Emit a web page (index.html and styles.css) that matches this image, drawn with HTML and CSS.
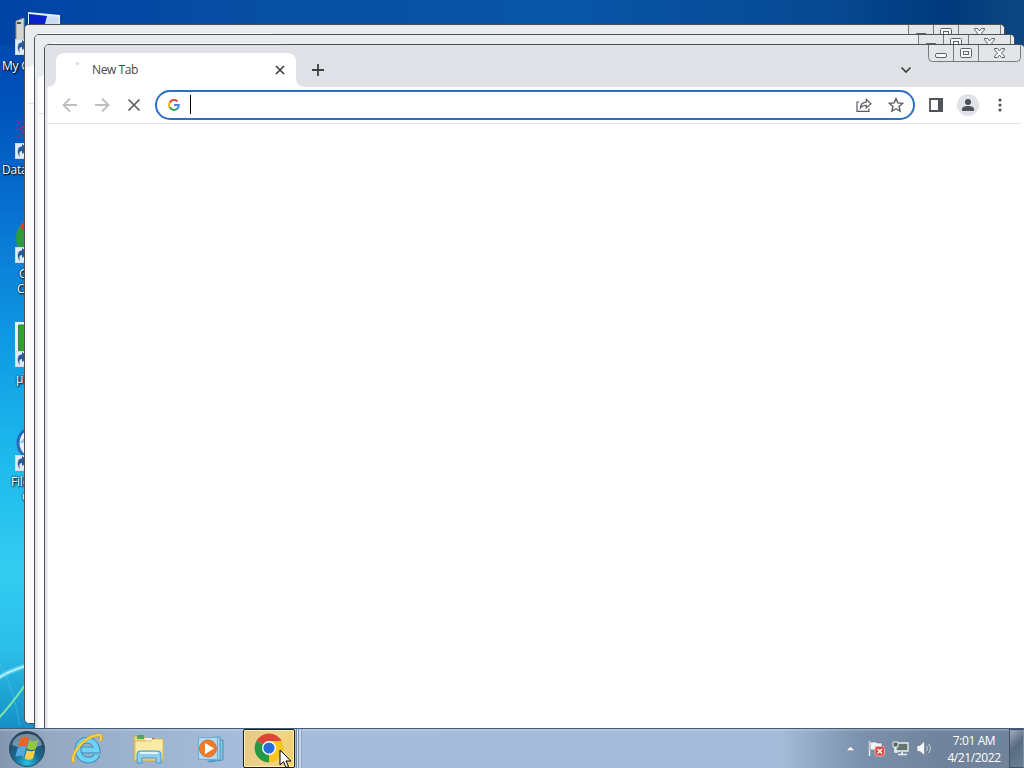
FILE: index.html
```html
<!DOCTYPE html>
<html lang="en">
<head>
    <meta charset="UTF-8">
    <meta name="viewport" content="width=device-width, initial-scale=1.0">
    <title>New Tab</title>
    <link rel="stylesheet" href="styles.css">
</head>
<body>
    <!-- shared symbols -->
    <svg class="symbols" width="0" height="0">
        <symbol id="shortcut" viewBox="0 0 16 16">
            <rect x=".5" y=".5" width="15" height="15" fill="#dfeaf5" stroke="#c9d9e8"/>
            <path d="M5 14C1.500 10 2 3.500 7 3.500V1l7 5-7 5V8c-3 0-3 3-2 6z" fill="#235b9c"/>
        </symbol>
        <symbol id="controls" viewBox="0 0 94 18">
            <path d="M.5 0v13.500q0 4 4 4h84q4 0 4-4V.5H.5" fill="#e3e5e9" stroke="#77797d"/>
            <path d="M25.500 0v17M50.500 0v17" stroke="#77797d"/>
            <g fill="#f7f8f9" stroke="#606267">
                <rect x="7.500" y="9.500" width="11" height="4" rx="1.500"/>
                <rect x="32.500" y="4.500" width="11" height="9" rx="1"/>
                <rect x="35.500" y="7.500" width="5" height="3"/>
                <path d="M66.500 4.500h3l2 2.500 2-2.500h3l-.2 1.500-2.800 3 2.800 3 .2 1.500h-3l-2-2.500-2 2.500h-3l.2-1.500 2.800-3-2.800-3z"/>
            </g>
        </symbol>
    </svg>

    <div class="desktop">
        <svg class="light-trails" width="40" height="110" viewBox="0 0 40 110" fill="none">
            <path d="M-2 60Q12 51 40 44" stroke="#8fe6fb" stroke-width="5" opacity=".5"/>
            <path d="M-2 60Q12 51 40 44" stroke="#c5f5ff" stroke-width="1.500"/>
            <path d="M-2 101Q12 86 30 60" stroke="#83e6a6" stroke-width="2"/>
            <path d="M-2 42Q14 70 20 108" stroke="#7fdcf5" opacity=".3"/>
        </svg>

        <div class="icon computer">
            <svg width="48" height="46" viewBox="0 0 48 46">
                <path d="M4 11l8-3v29H4z" fill="#d5d6d2" stroke="#8c9193"/>
                <path d="M5 13h4" stroke="#4b5453" stroke-width="2"/>
                <path d="M16 2l33 3-2 30-31-3z" fill="#e7edf4"/>
                <path d="M17 4l30 3-2 25-28-3z" fill="#cbdcf3"/>
                <path d="M17 4l18 2-6 24-12-1z" fill="#0921c9"/>
                <use href="#shortcut" x="3" y="29" width="16" height="16"/>
            </svg>
            <span class="label">My Computer</span>
        </div>
        <div class="icon database">
            <svg width="48" height="46" viewBox="0 0 48 46">
                <path d="M6 8l5 5 5-5M6 23l5-6 5 6M7 15h8" stroke="#a72c62" stroke-width="1.500" fill="none" stroke-dasharray="3 2"/>
                <use href="#shortcut" x="3" y="29" width="16" height="16"/>
            </svg>
            <span class="label">Database</span>
        </div>
        <div class="icon chrome-link">
            <svg width="48" height="46" viewBox="0 0 48 46">
                <circle cx="24" cy="20" r="20" fill="#2c9c3d"/>
                <path d="M8 8A20 20 0 0 1 41 10L24 20 12 14z" fill="#e33b2e"/>
                <use href="#shortcut" x="3" y="29" width="16" height="16"/>
            </svg>
            <span class="label">Google</span>
            <span class="label">Chrome</span>
        </div>
        <div class="icon torrent">
            <svg width="48" height="46" viewBox="0 0 48 46">
                <path d="M3 0h40v44H3z" fill="#e7f0ec"/>
                <path d="M6.500 3h34v38h-34z" fill="#2da52b" stroke="#53716a"/>
                <use href="#shortcut" x="3" y="29" width="16" height="16"/>
            </svg>
            <span class="label">µTorrent</span>
        </div>
        <div class="icon viewer">
            <svg width="48" height="46" viewBox="0 0 48 46">
                <circle cx="22" cy="17" r="16" fill="#e5f2fb" stroke="#2867c0" stroke-width="3"/>
                <path d="M7 17l10-10v10z" fill="#9cc6ed"/>
                <use href="#shortcut" x="3" y="29" width="16" height="16"/>
            </svg>
            <span class="label">File Viewer</span>
            <span class="label">Gold</span>
        </div>

        <div class="window window-back">
            <svg class="controls" width="94" height="18"><use href="#controls"/></svg>
            <div class="tab-strip"><div class="tab"></div></div>
            <div class="toolbar"></div>
        </div>
        <div class="window window-middle">
            <svg class="controls" width="94" height="18"><use href="#controls"/></svg>
            <div class="tab-strip"><div class="tab"></div></div>
            <div class="toolbar"></div>
        </div>
        <div class="window window-front">
            <svg class="controls" width="94" height="18"><use href="#controls"/></svg>
            <div class="tab-strip">
                <div class="tab">
                    <span class="loading"></span>
                    <span class="tab-title">New Tab</span>
                    <svg width="10" height="10" viewBox="0 0 10 10"><path d="M1 1l8 8M9 1l-8 8" stroke="#3c4043" stroke-width="1.700"/></svg>
                </div>
                <svg class="new-tab" width="12" height="12" viewBox="0 0 12 12"><path d="M6 0v12M0 6h12" stroke="#3c4043" stroke-width="1.800"/></svg>
                <svg class="tab-search" width="12" height="8" viewBox="0 0 12 8"><path d="M1.500 1.500L6 6l4.500-4.500" fill="none" stroke="#3c4043" stroke-width="1.700"/></svg>
            </div>
            <div class="toolbar">
                <svg class="nav" width="16" height="16" viewBox="0 0 16 16"><path d="M15 8H2M8 1.500L1.500 8 8 14.500" fill="none" stroke="#bcbec1" stroke-width="1.800"/></svg>
                <svg class="nav" width="16" height="16" viewBox="0 0 16 16"><path d="M1 8h13M8 1.500L14.500 8 8 14.500" fill="none" stroke="#bcbec1" stroke-width="1.800"/></svg>
                <svg class="nav" width="16" height="16" viewBox="0 0 16 16"><path d="M2.500 2.500l11 11M13.500 2.500l-11 11" stroke="#5a5d61" stroke-width="1.700"/></svg>
                <div class="address">
                    <svg width="12" height="12" viewBox="0 0 12 12" fill="none" stroke-width="2">
                        <path d="M9.600 2.400A5 5 0 0 0 1.700 3.700" stroke="#e64334"/>
                        <path d="M1.700 3.500A5 5 0 0 0 1.700 8.500" stroke="#f9bb0b"/>
                        <path d="M1.700 8.300A5 5 0 0 0 9.200 9.800" stroke="#34a853"/>
                        <path d="M6 6h4.800A5 5 0 0 1 9.100 9.900" stroke="#4285f4"/>
                    </svg>
                    <span class="caret"></span>
                    <svg class="share" width="16" height="16" viewBox="0 0 16 16" fill="none" stroke="#5a5d61" stroke-width="1.200">
                        <path d="M3 5H1v9.300h12V11.500"/>
                        <path d="M4.300 11c.3-4 2.400-5.800 6-5.900V2.300L15 6.700 10.300 11V8.300C7.500 8.200 5.700 9 4.300 11z"/>
                    </svg>
                    <svg width="16" height="16" viewBox="0 0 16 16"><path d="M8 1.700l1.900 4.200 4.600.5-3.400 3.100 1 4.500L8 11.700 3.900 14l1-4.500L1.500 6.400l4.600-.5z" fill="none" stroke="#5a5d61" stroke-width="1.400"/></svg>
                </div>
                <svg class="panel" width="14" height="14" viewBox="0 0 14 14"><path d="M1 1h12v12H1z" fill="none" stroke="#505357" stroke-width="1.800"/><path d="M9 0h5v14H9z" fill="#505357"/></svg>
                <svg class="profile" width="22" height="22" viewBox="0 0 22 22"><circle cx="11" cy="11" r="11" fill="#e1e3e9"/><circle cx="11" cy="7.900" r="3" fill="#4d5158"/><path d="M5 17v-2c0-4 12-4 12 0v2z" fill="#4d5158"/></svg>
                <svg class="menu" width="4" height="14" viewBox="0 0 4 14" fill="#505357"><circle cx="2" cy="2" r="1.600"/><circle cx="2" cy="7" r="1.600"/><circle cx="2" cy="12" r="1.600"/></svg>
            </div>
        </div>
    </div>

    <div class="taskbar">
        <svg class="start" width="38" height="38" viewBox="0 0 38 38">
            <defs>
                <radialGradient id="orb" cx="50%" cy="90%" r="85%">
                    <stop offset="0" stop-color="#29c0df"/>
                    <stop offset=".45" stop-color="#17688f"/>
                    <stop offset="1" stop-color="#2b455d"/>
                </radialGradient>
            </defs>
            <circle cx="19" cy="19" r="17.500" fill="url(#orb)" stroke="#284863"/>
            <path d="M4 15C7 0 31 0 34 15Q19 22 4 15z" fill="#d2e2ec" opacity=".45"/>
            <path d="M12.500 8q4-2.500 8.500 0l-2.200 9q-4-2.500-8.500 0z" fill="#e96524"/>
            <path d="M21.500 10q4 2.500 8.500 0l-2.200 9q-4 2-8.500 0z" fill="#95c743"/>
            <path d="M9.500 18q4-2.500 8.500 0l-2.200 9q-4-2.500-8.500 0z" fill="#57a8e0"/>
            <path d="M18.800 20q4 2.500 8.500 0l-2.200 8.500q-4 2.500-8.500 0z" fill="#fbd14c"/>
        </svg>
        <svg class="explorer" width="34" height="34" viewBox="0 0 34 34" fill="none">
            <path d="M27 22.500C24 31 9 30 8 18S25 4 27 18H12" stroke="#2a87bb" stroke-width="6.500"/>
            <path d="M27 22.500C24 31 9 30 8 18S25 4 27 18H12" stroke="#6fd4f3" stroke-width="4.800"/>
            <path d="M4 30C-1 25 12 5 28 3c4-.5 4 3 2 6" stroke="#d99e1d" stroke-width="3"/>
            <path d="M4 30C-1 25 12 5 28 3c4-.5 4 3 2 6" stroke="#fbd545" stroke-width="1.800"/>
        </svg>
        <svg class="folders" width="34" height="32" viewBox="0 0 34 32">
            <path d="M2 3h10l2 3h17v22H2z" fill="#eed57c" stroke="#c6a951"/>
            <path d="M5 2h7v4H5z" fill="#4fa85b"/>
            <path d="M13 5h8v4h-8z" fill="#f6f4e4"/>
            <path d="M20 5h3v2h-3z" fill="#d34c2c"/>
            <path d="M3 8h16l2-2h10v20H3z" fill="#f9eaa6" stroke="#d9bf69"/>
            <path d="M5 30V21q0-3 3-3h18q3 0 3 3v9h-5v-5H10v5z" fill="#8fcdec" stroke="#4c9dcc"/>
            <path d="M8 20h18" stroke="#dcf5ff" stroke-width="2"/>
        </svg>
        <svg class="player" width="28" height="28" viewBox="0 0 28 28">
            <path d="M8 4l18 1v20l-14 2z" fill="#8fbfdf" stroke="#4a92bb"/>
            <path d="M5 3l18-1v23l-12 1z" fill="#a9d5ee" stroke="#4b9bc8"/>
            <path d="M1.500 2.500h19v22h-19z" fill="#b4d7ee" stroke="#6aaed4"/>
            <circle cx="11" cy="13.500" r="8.500" fill="#f37a27" stroke="#c9733c"/>
            <path d="M8 8l9 5.500L8 19z" fill="#fff"/>
        </svg>
        <div class="task-stack">
            <div class="task">
                <svg width="30" height="30" viewBox="0 0 30 30">
                    <path d="M15 15L2.500 7.800A14.500 14.500 0 0 1 27.600 7.800z" fill="#dc4537"/>
                    <path d="M15 15L27.600 7.800A14.500 14.500 0 0 1 15 29.500z" fill="#fbc71e"/>
                    <path d="M15 15v14.500A14.500 14.500 0 0 1 2.500 7.800z" fill="#279846"/>
                    <path d="M15 8h12.700A14.500 14.500 0 0 1 15 29.500L21 18.500z" fill="#fbc71e"/>
                    <circle cx="15" cy="15" r="7" fill="#fff"/>
                    <circle cx="15" cy="15" r="5.600" fill="#246ed5"/>
                </svg>
            </div>
        </div>
        <div class="tray">
            <svg width="9" height="5" viewBox="0 0 9 5"><path d="M.5 4.500l4-4 4 4z" fill="#fff" stroke="#596a80" stroke-width=".3"/></svg>
            <svg class="flag" width="17" height="17" viewBox="0 0 17 17">
                <path d="M1.500 1v15" stroke="#e9eef2" stroke-width="1.500"/>
                <path d="M2 2h6l1 1h5v8H8L7 10H2z" fill="#f0f3f5" stroke="#6e7780" stroke-width=".6"/>
                <rect x="7" y="6.500" width="9.500" height="9.500" rx="2" fill="#d94a40" stroke="#efaaa2"/>
                <path d="M9.500 9l4.500 4.500M14 9l-4.500 4.500" stroke="#fff" stroke-width="1.500"/>
            </svg>
            <svg class="network" width="17" height="17" viewBox="0 0 17 17">
                <path d="M4 3h12v8H4z" fill="#62766c" stroke="#e9efed" stroke-width="1.300"/>
                <path d="M1 2h5v5H1z" fill="#596666" stroke="#e9efed"/>
                <path d="M3 7v5h3M10 12v2M6 14.500h9" stroke="#e9efed" fill="none" stroke-width="1.700"/>
            </svg>
            <svg class="volume" width="17" height="17" viewBox="0 0 17 17" fill="none">
                <path d="M1 5.500h3L8.500 1v14.500L4 11.500H1z" fill="#f4f7f9" stroke="#68747f" stroke-width=".6"/>
                <path d="M10.500 6q2 2.500 0 5M12.500 4q4 4.500 0 9" stroke="#c7d1db"/>
            </svg>
            <div class="clock">
                <span>7:01 AM</span>
                <span>4/21/2022</span>
            </div>
        </div>
        <div class="show-desktop"></div>
    </div>

    <svg class="cursor" width="13" height="20" viewBox="0 0 13 20"><path d="M1 1v15l3.500-3.300L7 18.500l2.500-1L7 12h4.800z" fill="#fff" stroke="#000"/></svg>
</body>
</html>
```
FILE: styles.css
```css
body {
    font-family: "Open Sans", "Noto Sans", sans-serif;
    font-size: 12px;
    margin: 0;
    width: 1024px;
    height: 768px;
    overflow: hidden;
    display: flex;
    flex-direction: column;
}

svg {
    display: block;
    flex: none;
}

.symbols {
    position: absolute;
}

.desktop {
    position: relative;
    height: 728px;
    overflow: hidden;
    background:
        linear-gradient(90deg, #0043a6 0, #074fa3 25%, #0855a7 55%, #074a94 80%, #003a7d 92%, #0d4680 100%) 0 0 / 100% 45px no-repeat,
        linear-gradient(#0043a6 0, #0054bd 110px, #0874d2 220px, #0e96e2 330px, #1bb5ec 440px, #32ccf1 570px, #2bbfe8 650px, #1590c6 728px);
}

.light-trails {
    position: absolute;
    left: 0;
    top: 618px;
}

/* desktop icons */
.icon {
    position: absolute;
    width: 80px;
    height: 90px;
    color: #fff;
}

.icon svg {
    margin-left: 12px;
}

.label {
    display: block;
    line-height: 15px;
    white-space: nowrap;
    letter-spacing: -0.2px;
    text-shadow: 1px 1px 2px #000, 0 0 2px #000;
}

.computer {
    left: 0;
    top: 10px;
}

.database {
    left: 0;
    top: 114px;
}

.chrome-link {
    left: 0;
    top: 218px;
}

.torrent {
    left: 0;
    top: 322px;
}

.viewer {
    left: 0;
    top: 426px;
}

.computer .label,
.database .label {
    margin: 2px 0 0 2px;
}

.chrome-link .label {
    margin-left: 19px;
}

.chrome-link .label + .label {
    margin-left: 17px;
}

.chrome-link svg {
    margin-bottom: 2px;
}

.torrent .label {
    margin: 3px 0 0 16px;
}

.viewer .label {
    margin: 2px 0 0 11px;
}

.viewer .label + .label {
    margin: 0 0 0 22px;
}

/* browser windows */
.window {
    position: absolute;
    box-sizing: border-box;
    width: 981px;
    height: 700px;
    padding: 0 3px;
    border: 1px solid #4b5159;
    border-radius: 5px;
    background: linear-gradient(90deg, #e2e4e8 0, #eff0f2 3px, #fff 3px);
    overflow: hidden;
}

.window-back {
    left: 24px;
    top: 24px;
    background: #fafafb;
}

.window-middle {
    left: 34px;
    top: 34px;
}

.window-front {
    left: 44px;
    top: 44px;
}

.controls {
    position: absolute;
    right: 2px;
    top: -1px;
}

.tab-strip {
    display: flex;
    align-items: center;
    height: 42px;
    margin: 0 -3px;
    padding-left: 11px;
    background: #dfe1e6;
}

.window-back .tab-strip,
.window-middle .tab-strip {
    background: #e9ebee;
}

.tab {
    position: relative;
    box-sizing: border-box;
    display: flex;
    align-items: center;
    align-self: flex-end;
    width: 240px;
    height: 34px;
    padding: 0 11px 0 20px;
    border-radius: 8px 8px 0 0;
    background: #fff;
}

/* curved feet of the active tab */
.tab::before,
.tab::after {
    content: "";
    position: absolute;
    bottom: 0;
    width: 8px;
    height: 8px;
}

.tab::before {
    left: -8px;
    background: radial-gradient(circle at 0 0, transparent 7.5px, #fff 8px);
}

.tab::after {
    right: -8px;
    background: radial-gradient(circle at 100% 0, transparent 7.5px, #fff 8px);
}

.loading {
    width: 3px;
    height: 3px;
    margin-bottom: 14px;
    border-radius: 50%;
    background: #d5d8dc;
}

.tab-title {
    flex: 1;
    margin: 0 0 2px 13px;
    color: #45494d;
    letter-spacing: -0.4px;
}

.new-tab {
    margin: 8px 0 0 16px;
}

.tab-search {
    margin: 8px 0 0 576px;
}

.toolbar {
    display: flex;
    align-items: center;
    box-sizing: border-box;
    height: 37px;
    padding-left: 14px;
    border-bottom: 1px solid #e1e2e4;
    background: #fff;
}

.nav {
    margin-right: 16px;
}

.address {
    box-sizing: border-box;
    display: flex;
    align-items: center;
    width: 760px;
    height: 30px;
    margin-left: -3px;
    padding: 0 9px 0 11px;
    border: 2px solid #2c6fc3;
    border-radius: 15px;
}

.caret {
    width: 1px;
    height: 19px;
    margin: -2px auto 0 10px;
    background: #000;
}

.share {
    margin-right: 16px;
}

.panel {
    margin-left: 14px;
}

.profile {
    margin-left: 14px;
}

.menu {
    margin-left: 19px;
}

/* taskbar */
.taskbar {
    box-sizing: border-box;
    display: flex;
    align-items: center;
    height: 40px;
    border-top: 1px solid #405c7b;
    background: linear-gradient(#ffffff40 0, #ffffff00 3px), linear-gradient(90deg, #8397b2 0, #96a9c2 50px, #9bb1cd 120px, #a5bddb 240px, #a4bcd9 780px, #7b91ac 860px, #70839c 940px, #71849c 1024px);
}

.start {
    margin-left: 8px;
}

.explorer {
    margin-left: 24px;
}

.folders {
    margin-left: 28px;
}

.player {
    margin-left: 31px;
}

.task-stack {
    box-sizing: border-box;
    height: 39px;
    width: 59px;
    margin-left: 18px;
    padding-right: 5px;
    background: linear-gradient(90deg, transparent 53px, #6f86a2 53px, #6f86a2 54px, #dce8f4 54px, #dce8f4 55px, #7990ad 55px, #7990ad 56px, #c5d6e8 56px, #c5d6e8 58px, #8ea4c0 58px);
}

.task {
    box-sizing: border-box;
    display: flex;
    align-items: center;
    justify-content: center;
    width: 52px;
    height: 39px;
    border: 1px solid #1f1c14;
    border-radius: 2px;
    box-shadow: inset 0 0 0 1px #fff0b8;
    background: linear-gradient(110deg, #e6c886, #f0d489 60%, #f3cf68);
}

.task svg {
    margin: -2px 0 0 -1px;
}

.tray {
    display: flex;
    align-items: center;
    margin-left: auto;
    color: #fff;
}

.flag {
    margin-left: 13px;
}

.network {
    margin-left: 7px;
}

.volume {
    margin-left: 7px;
}

.clock {
    display: flex;
    flex-direction: column;
    align-items: center;
    width: 66px;
    margin-left: 8px;
    line-height: 17px;
    letter-spacing: -0.4px;
}

.show-desktop {
    box-sizing: border-box;
    width: 15px;
    height: 39px;
    margin-left: 2px;
    border: 1px solid #40526a;
    border-right-color: #7f91a7;
    background: linear-gradient(135deg, #a0adbc, #596b82 45%, #6e8096);
}

.cursor {
    position: absolute;
    left: 279px;
    top: 749px;
}
```
